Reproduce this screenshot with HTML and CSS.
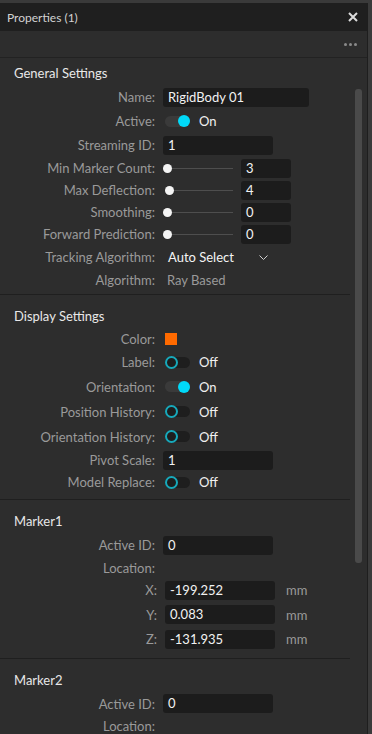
FILE: index.html
```html
<!DOCTYPE html>
<html lang="en">
<head>
    <meta charset="UTF-8">
    <meta name="viewport" content="width=device-width, initial-scale=1.0">
    <title>Properties</title>
    <link rel="stylesheet" href="styles.css">
</head>
<body>
    <div class="panel">
        <div class="titlebar">
            <span class="title">Properties (1)</span>
            <svg class="close" width="10" height="10" viewBox="0 0 10 10">
                <path d="M1 1 L9 9 M9 1 L1 9" stroke="#dcdcdc" stroke-width="2"/>
            </svg>
        </div>
        <div class="toolbar">
            <span class="dots"><i></i><i></i><i></i></span>
        </div>

        <div class="body">
            <div class="sections">
                <div class="section first">
                    <h3>General Settings</h3>
                    <div class="row"><label>Name:</label><div class="field wide">RigidBody 01</div></div>
                    <div class="row"><label>Active:</label><span class="toggle on"></span><span class="state">On</span></div>
                    <div class="row"><label>Streaming ID:</label><div class="field">1</div></div>
                    <div class="row short"><label>Min Marker Count:</label><span class="slider"></span><div class="field small">3</div></div>
                    <div class="row short"><label>Max Deflection:</label><span class="slider moved"></span><div class="field small">4</div></div>
                    <div class="row short"><label>Smoothing:</label><span class="slider"></span><div class="field small">0</div></div>
                    <div class="row short"><label>Forward Prediction:</label><span class="slider"></span><div class="field small">0</div></div>
                    <div class="row"><label>Tracking Algorithm:</label>
                        <span class="select">Auto Select</span>
                        <svg class="chevron" width="9" height="5" viewBox="0 0 9 5">
                            <polyline points="0.5,0.5 4.5,4.5 8.5,0.5" fill="none" stroke="#cfcfcf" stroke-width="1"/>
                        </svg>
                    </div>
                    <div class="row short"><label>Algorithm:</label><span class="plain">Ray Based</span></div>
                </div>

                <div class="section">
                    <h3>Display Settings</h3>
                    <div class="row short"><label>Color:</label><span class="swatch"></span></div>
                    <div class="row"><label>Label:</label><span class="toggle"></span><span class="state">Off</span></div>
                    <div class="row tall"><label>Orientation:</label><span class="toggle on"></span><span class="state">On</span></div>
                    <div class="row tall"><label>Position History:</label><span class="toggle"></span><span class="state">Off</span></div>
                    <div class="row tall"><label>Orientation History:</label><span class="toggle"></span><span class="state">Off</span></div>
                    <div class="row short"><label>Pivot Scale:</label><div class="field">1</div></div>
                    <div class="row short"><label>Model Replace:</label><span class="toggle"></span><span class="state">Off</span></div>
                </div>

                <div class="section">
                    <h3>Marker1</h3>
                    <div class="row"><label>Active ID:</label><div class="field">0</div></div>
                    <div class="row compact"><label>Location:</label></div>
                    <div class="row coord"><label>X:</label><div class="field">-199.252</div><span class="unit">mm</span></div>
                    <div class="row coord"><label>Y:</label><div class="field">0.083</div><span class="unit">mm</span></div>
                    <div class="row coord"><label>Z:</label><div class="field">-131.935</div><span class="unit">mm</span></div>
                </div>

                <div class="section">
                    <h3>Marker2</h3>
                    <div class="row"><label>Active ID:</label><div class="field">0</div></div>
                    <div class="row compact"><label>Location:</label></div>
                </div>
            </div>
            <div class="scrollbar"><div class="thumb"></div></div>
        </div>
    </div>
</body>
</html>
```

FILE: styles.css
```css
html, body {
    margin: 0;
    padding: 0;
    height: 100%;
}
body {
    font-family: Lato, "Open Sans", sans-serif;
    font-size: 13px;
    background-color: #3a3a3a;
    overflow: hidden;
}
.panel {
    width: 367px;
    height: 731px;
    margin-top: 3px;
    background-color: #2d2d2d;
    border-right: 1px solid #1e1e1e;
    display: flex;
    flex-direction: column;
}
.titlebar {
    height: 28px;
    background-color: #1f1f1f;
    display: flex;
    align-items: center;
    justify-content: space-between;
    padding: 0 7px;
}
.title {
    color: #d2d2d2;
    font-size: 12px;
}
.close {
    margin-right: 2px;
}
.toolbar {
    height: 26px;
    border-bottom: 1px solid #222222;
    display: flex;
    align-items: center;
    justify-content: flex-end;
    padding-right: 10px;
}
.dots {
    display: flex;
    gap: 2px;
}
.dots i {
    width: 3px;
    height: 3px;
    border-radius: 50%;
    background-color: #8a8a8a;
}
.body {
    flex: 1;
    display: flex;
    overflow: hidden;
}
.sections {
    width: 350px;
}
.scrollbar {
    flex: 1;
    padding: 31px 0 0 5px;
}
.thumb {
    width: 7px;
    height: 474px;
    background-color: #4a4a4a;
    border-radius: 3px;
}
.section {
    padding: 12px 0 6px 14px;
    border-bottom: 1px solid #1f1f1f;
}
.section.first {
    padding-top: 6px;
    padding-bottom: 3px;
}
h3 {
    margin: 0 0 3px;
    font-size: 13px;
    font-weight: normal;
    color: #e8e8e8;
    height: 18px;
    line-height: 18px;
}
.row {
    display: flex;
    align-items: center;
    height: 24px;
}
.row.short {
    height: 22px;
}
.row.compact {
    height: 21px;
}
.row.tall {
    height: 25px;
}
.row.coord {
    height: 24.5px;
}
.row label {
    width: 141px;
    text-align: right;
    color: #9a9a9a;
    margin-right: 8px;
    flex-shrink: 0;
}
.row.coord label {
    width: 143px;
}
.field {
    width: 105px;
    height: 19px;
    line-height: 19px;
    background-color: #1c1c1c;
    border-radius: 3px;
    color: #f2f2f2;
    padding-left: 5px;
    box-sizing: content-box;
}
.field.wide {
    width: 141px;
}
.field.small {
    width: 45px;
    margin-left: 8px;
}
.unit {
    color: #9a9a9a;
    margin-left: 11px;
}
.toggle {
    position: relative;
    width: 25px;
    height: 11px;
    margin-left: 2px;
    border-radius: 6px;
    background-color: #1e1e1e;
}
.toggle::after {
    content: "";
    position: absolute;
    left: 0;
    top: -1px;
    width: 9px;
    height: 9px;
    border-radius: 50%;
    border: 2px solid #17a9bb;
    background-color: #1e1e1e;
}
.toggle.on {
    background-color: #3a3a3a;
}
.toggle.on::after {
    left: 13px;
    width: 12px;
    height: 12px;
    top: -0.5px;
    border: none;
    background-color: #00d9f8;
}
.state {
    color: #f0f0f0;
    margin-left: 9px;
}
.slider {
    position: relative;
    width: 66px;
    height: 1px;
    margin-left: 4px;
    background-color: #4e4e4e;
}
.slider::before {
    content: "";
    position: absolute;
    left: -4px;
    top: -4px;
    width: 9px;
    height: 9px;
    border-radius: 50%;
    background-color: #f4f4f4;
}
.slider.moved::before {
    left: -2px;
}
.select {
    color: #f4f4f4;
    margin-left: 5px;
    width: 90px;
}
.chevron {
    margin-left: 1px;
}
.plain {
    color: #9a9a9a;
    margin-left: 4px;
}
.swatch {
    width: 12px;
    height: 12px;
    margin-left: 2px;
    background-color: #ff6a00;
}
```
